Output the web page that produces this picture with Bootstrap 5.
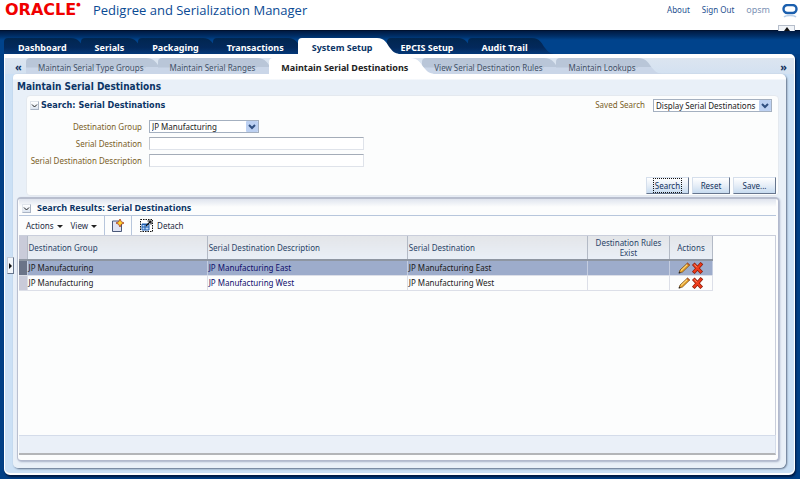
<!DOCTYPE html>
<html lang="en">
<head>
<meta charset="utf-8">
<meta name="viewport" content="width=device-width, initial-scale=1">
<title>Pedigree and Serialization Manager</title>
<link href="https://cdn.jsdelivr.net/npm/bootstrap@5.3.0/dist/css/bootstrap.min.css" rel="stylesheet">
<style>
body{font-family:"Noto Sans",sans-serif;font-size:8px;line-height:12px;color:#222;background:#003f85}
a{text-decoration:none}
.masthead{height:31px;background:#fff;border-bottom:1px solid #001230;padding:0 2px 0 5px}
.brand-mark{font:bold 16px/20px "DejaVu Sans",sans-serif;color:#f00000;width:88px}
.brand-mark sup{font-size:5px;top:-9px}
.app-name{font:13px/21px "Open Sans",sans-serif;color:#0a4a94;margin:0}
.masthead a{color:#1d4f8f}
.user-name{color:#7c92b4;font-size:9px}
.collapse-grip{width:17px;height:6px;padding:0;border:1px solid #b5bdca;border-bottom:0;background:#f1f4f8;right:5px;top:25px}
.top-nav{padding:7px 4px 0;background:linear-gradient(#001a42,#002e66 5px,#00438c 9px,#00438c)}
.main-tab,.sub-tab{height:16px;line-height:17px;position:relative}
.main-tab{color:#fff;font-size:9px;font-weight:700}
.main-tab span{background:linear-gradient(#01264f,#03295c 60%,#043878);padding:1px 4px 0 14px;border-top-left-radius:4px}
.main-tab svg{width:22px;height:16px;margin-right:-12px}
.main-tab.on{color:#0c3566;z-index:2}
.main-tab.on span{background:#fff}
.frame{margin:0 5px 4px 4px;background:#cbe0f5;border:1px solid #fff;border-top:4px solid #fff;border-radius:0 5px 6px 6px;border-bottom:2px solid #fff;padding:0 8px 5px;box-shadow:1px 2px 2px #001a42}
.sub-nav{background:linear-gradient(#dce5f0,#d3e1f1);margin:0 -8px;padding:0 7px 0 10px;height:16px}
.sub-tab{font-size:8px;line-height:19px;color:#3f5066}
.sub-tab span{background:linear-gradient(#b9c6d8 9px,#cad6e8 10px);padding:0 2px 0 12px;border-top-left-radius:4px}
.sub-tab svg{width:24px;height:16px;margin-right:-12px}
.sub-tab.on{color:#222;font-size:9px;font-weight:700;z-index:2}
.sub-tab.on span{background:#fff}
.nav-step{border:0;background:none;padding:0;width:11px;color:#12315c;font-weight:700;font-size:11px;line-height:15px;text-align:left}
.panel-page{background:linear-gradient(#fff 5px,#e9f0f8 6px);border-radius:4px 5px 6px 5px;padding:6px 7px 7px 4px;box-shadow:1px 1px 2px #5f6f87}
.page-title{font:bold 10px/14px "DejaVu Sans Condensed",sans-serif;color:#0c3566;margin:0}
.query-box{background:#fcfdfd;border:1px solid #e4e9ef;border-radius:4px;margin:1px 0 0 9px;padding:2px 2px 1px 3px;min-height:101px}
.box-title{font:bold 9px/14px "DejaVu Sans Condensed",sans-serif;color:#0c3566;margin:0}
.result-head .box-title{font-family:"Noto Sans",sans-serif}
.disclose{width:9px;height:9px;margin-right:2px;padding:0;border:1px solid #aab4c4;border-top-color:#e0e5ec;border-left-color:#e0e5ec;background:linear-gradient(#fff,#dbe4f0)}
.fld-label{color:#7b5f28;width:112px;text-align:right}
.fld{height:13px;border:1px solid #dfe3ea;border-top:1px solid #a4acb8;border-left-color:#c3c8d0;background:#fff;padding:0 2px;font-size:8px;line-height:11px;border-radius:0;width:215px;color:#222}
select.fld{appearance:none;border-color:#a4b0c0;width:110px;background:#fff url("data:image/svg+xml,%3Csvg xmlns='http://www.w3.org/2000/svg' viewBox='0 0 12 11'%3E%3Crect width='12' height='11' rx='1' fill='%23bdd1f2'/%3E%3Cpath d='M3 4l3 3 3-3' fill='none' stroke='%23304f80' stroke-width='2'/%3E%3C/svg%3E") no-repeat right 0 top 0/12px 11px}
select.saved{width:119px}
.fields{gap:4px;margin-top:8px}
.fields>div{gap:7px}
.cmd{height:17px;min-width:38px;padding:0 7px;border:1px solid #d5dfec;border-right:1px solid #66758d;border-bottom:1px solid #66758d;border-radius:0;font-size:8px;line-height:14px;color:#12315c;background:linear-gradient(#fff,#e6eef7 50%,#c7dbf0)}
.cmd.wide{min-width:43px}
.cmd.focused span{outline:1px dotted #111;outline-offset:1px}
.cmds{gap:3px}
.result-box{background:#fcfdfd;border:1px solid #b2b9cd;border-left:1px solid #b9c0d0;border-top:2px solid #b8bece;border-radius:4px;margin-top:1px;padding:0 2px 5px 1px;box-shadow:1px 1px 2px #a9b2c8}
.result-head{height:17px;padding:2px 4px 0 3px;background:linear-gradient(#dfe4ee,#fcfdfd 8px);border-bottom:1px solid #b7c6dc}
.tool-row{height:19px}
.tool{border:0;background:none;padding:0;color:#1d2c44;font-size:8px;line-height:12px}
.tool-menu::after{content:"";display:inline-block;border:3px solid transparent;border-top-color:#222;border-bottom:0;margin-left:3px;vertical-align:1px}
.tool-cell{border-right:1px solid #b7c6dc;padding:0 7px}
.grid-area{border:1px solid #c9cedb;border-left:0;border-bottom:0;background:#fcfdfd}
.results{table-layout:fixed;width:694px;border-collapse:collapse}
.results th{height:24px;font-weight:400;color:#2a4468;background:linear-gradient(#e3e5e8,#e9eff7);border-right:1px solid #b3bac6;border-bottom:2px solid #8e96a2;padding:0 1px;line-height:10px;vertical-align:middle}
.results td{height:15px;padding:0 1px;line-height:13px;border-right:1px solid #dcdfe8;border-bottom:1px solid #dcdfe8;color:#1b1b1b}
.results tr.picked td{background:#9daccb;border-right-color:#c4cde0}
.results .grip{background:#c9cbd9}
.results tr.picked td.grip{background:#6b7488}
.results td a{color:#10106c}
.results td button{border:0;background:none;padding:0;width:13px;height:12px}
.c-grip{width:8px}.c-group{width:180px}.c-desc{width:200px}.c-dest{width:180px}.c-rule{width:82px}.c-act{width:43px}
.grid-foot{height:20px;background:#eaf0f8;border:1px solid #d4dcea;border-bottom:2px solid #b3b5b8;border-left:0}
.side-grip{left:7px;top:257px;width:7px;height:17px;padding:0;border:1px solid #c0c8d4;border-right-color:#66758d;border-bottom-color:#66758d;background:#f2f6fa;z-index:3}
svg{display:block;flex:none}
</style>
<script src="https://cdn.jsdelivr.net/npm/bootstrap@5.3.0/dist/js/bootstrap.bundle.min.js"></script>
</head>
<body class="d-flex flex-column min-vh-100 position-relative">
<svg width="0" height="0" class="position-absolute" aria-hidden="true">
  <defs>
    <linearGradient id="navy" x2="0" y2="1"><stop stop-color="#01264f"/><stop offset=".6" stop-color="#03295c"/><stop offset="1" stop-color="#043878"/></linearGradient>
    <linearGradient id="steel" x2="0" y2="1"><stop offset=".54" stop-color="#b9c6d8"/><stop offset=".58" stop-color="#cad6e8"/></linearGradient>
    <symbol id="slope" viewBox="0 0 22 16" preserveAspectRatio="none"><path d="M0 0C8 0 10 6 13 10S18 15 22 16H0z"/></symbol>
    <symbol id="pencil" viewBox="0 0 13 12"><path d="M1 11L2 8 9.500 1 11.800 3 4.500 10z" fill="#e9a22a" stroke="#6b4512" stroke-width=".7"/><path d="M3 8.500L9.500 2.300" stroke="#ffe99a" stroke-width="1"/><path d="M9 1.300L11.500 3.500" stroke="#b5542a" stroke-width="1.200"/><path d="M.6 11.500l.6-2 1.500 1.400z" fill="#222"/></symbol>
    <symbol id="cross" viewBox="0 0 13 12"><path d="M3.500 3L9.500 9.500M9.700 2.500L3.500 9.500" stroke="#8d1d0b" stroke-width="3.600" stroke-linecap="square"/><path d="M3.500 3L9.500 9.500M9.700 2.500L3.500 9.500" stroke="#ee3b1b" stroke-width="2.200" stroke-linecap="square"/><path d="M3.300 2.500L6 5.300" stroke="#ff9a72" stroke-width="1"/></symbol>
  </defs>
</svg>
<header class="masthead d-flex align-items-start">
  <div class="brand-mark">ORACLE<sup>●</sup></div>
  <h1 class="app-name">Pedigree and Serialization Manager</h1>
  <div class="ms-auto d-flex align-items-start pt-1">
    <a href="#" class="me-2">About</a><a href="#" class="mx-1 pe-1">Sign Out</a><span class="user-name mx-1 pe-2">opsm</span>
    <svg width="16" height="16" viewBox="0 0 16 16" fill="none" aria-label="Status"><rect x="1.500" y="1" width="13" height="8" rx="4" stroke="#1b5fae" stroke-width="2.400"/><path d="M2 13c2-2 10-2 12 0" stroke="#b9cfe8" stroke-width="1.500"/></svg>
  </div>
  <button class="collapse-grip position-absolute d-flex justify-content-center" aria-label="Collapse header"><svg width="8" height="5" viewBox="0 0 8 5"><path d="M1 5l3-4 3 4z" fill="#111"/></svg></button>
</header>
<nav class="top-nav d-flex" aria-label="Main">
  <a href="#" class="main-tab d-flex"><span>Dashboard</span><svg fill="url(#navy)"><use href="#slope"/></svg></a>
  <a href="#" class="main-tab d-flex"><span>Serials</span><svg fill="url(#navy)"><use href="#slope"/></svg></a>
  <a href="#" class="main-tab d-flex"><span>Packaging</span><svg fill="url(#navy)"><use href="#slope"/></svg></a>
  <a href="#" class="main-tab d-flex"><span>Transactions</span><svg fill="url(#navy)"><use href="#slope"/></svg></a>
  <a href="#" class="main-tab on d-flex"><span>System Setup</span><svg fill="#fff"><use href="#slope"/></svg></a>
  <a href="#" class="main-tab d-flex"><span>EPCIS Setup</span><svg fill="url(#navy)"><use href="#slope"/></svg></a>
  <a href="#" class="main-tab d-flex"><span>Audit Trail</span><svg fill="url(#navy)"><use href="#slope"/></svg></a>
</nav>
<button class="side-grip position-absolute" aria-label="Open side panel"><svg width="5" height="9" viewBox="0 0 5 9"><path d="M1 2l3 3-3 3z" fill="#111"/></svg></button>
<div class="frame d-flex flex-column flex-grow-1">
  <nav class="sub-nav d-flex" aria-label="System setup">
    <button class="nav-step" aria-label="Previous tabs">«</button>
    <a href="#" class="sub-tab d-flex"><span>Maintain Serial Type Groups</span><svg fill="url(#steel)"><use href="#slope"/></svg></a>
    <a href="#" class="sub-tab d-flex"><span>Maintain Serial Ranges</span><svg fill="url(#steel)"><use href="#slope"/></svg></a>
    <a href="#" class="sub-tab on d-flex"><span>Maintain Serial Destinations</span><svg fill="#fff"><use href="#slope"/></svg></a>
    <a href="#" class="sub-tab d-flex"><span>View Serial Destination Rules</span><svg fill="url(#steel)"><use href="#slope"/></svg></a>
    <a href="#" class="sub-tab d-flex"><span>Maintain Lookups</span><svg fill="url(#steel)"><use href="#slope"/></svg></a>
    <button class="nav-step ms-auto text-end" aria-label="Next tabs">»</button>
  </nav>
  <main class="panel-page d-flex flex-column flex-grow-1">
    <h2 class="page-title">Maintain Serial Destinations</h2>
    <form class="query-box d-flex flex-column">
      <div class="d-flex align-items-center">
        <button type="button" class="disclose" aria-label="Collapse search"><svg width="7" height="7" viewBox="0 0 7 7"><path d="M1 2.500l2.500 2.500L6 2.500" fill="none" stroke="#222"/></svg></button>
        <h3 class="box-title">Search: Serial Destinations</h3>
        <label for="saved" class="fld-label ms-auto me-1">Saved Search</label>
        <select id="saved" class="fld saved ms-1 me-1"><option>Display Serial Destinations</option></select>
      </div>
      <div class="fields d-flex flex-column">
        <div class="d-flex align-items-center"><label class="fld-label" for="grp">Destination Group</label><select id="grp" class="fld"><option>JP Manufacturing</option></select></div>
        <div class="d-flex align-items-center"><label class="fld-label" for="dst">Serial Destination</label><input id="dst" class="fld" type="text"></div>
        <div class="d-flex align-items-center"><label class="fld-label" for="dsc">Serial Destination Description</label><input id="dsc" class="fld" type="text"></div>
      </div>
      <div class="cmds d-flex justify-content-end mt-auto">
        <button type="button" class="cmd wide focused"><span>Search</span></button><button type="button" class="cmd">Reset</button><button type="button" class="cmd wide">Save...</button>
      </div>
    </form>
    <section class="result-box d-flex flex-column flex-grow-1">
      <div class="result-head d-flex align-items-center">
        <button type="button" class="disclose" aria-label="Collapse results"><svg width="7" height="7" viewBox="0 0 7 7"><path d="M1 2.500l2.500 2.500L6 2.500" fill="none" stroke="#222"/></svg></button>
        <h3 class="box-title ps-1">Search Results: Serial Destinations</h3>
      </div>
      <div class="tool-row d-flex align-items-stretch">
        <div class="tool-cell d-flex align-items-center gap-2">
          <button class="tool tool-menu">Actions</button><button class="tool tool-menu">View</button>
        </div>
        <div class="tool-cell d-flex align-items-center">
          <button class="tool" aria-label="Create"><svg width="12" height="13" viewBox="0 0 12 13"><path d="M.5 2h7l2 2v8.500h-9z" fill="#dfe3f2" stroke="#4a5878"/><path d="M8 0l1.300 2.700L12 4 9.300 5.300 8 8 6.700 5.300 4 4l2.700-1.300z" fill="#ffd52e" stroke="#a6331b" stroke-width=".8"/></svg></button>
        </div>
        <button class="tool d-flex align-items-center ms-2"><svg width="13" height="13" viewBox="0 0 13 13" class="me-1"><path d="M.5.500h12v12H.5z" fill="#fff" stroke="#111" stroke-dasharray="1.500 1"/><path d="M2 5h7v6H2z" fill="#bcd8f8" stroke="#1c5cae"/><path d="M2 5.500h7M2 8h7M5 5v6" stroke="#1c5cae"/><path d="M6 7l5-5M7.500 2H11v3.500" stroke="#111" stroke-width="1.200" fill="none"/></svg>Detach</button>
      </div>
      <div class="grid-area flex-grow-1">
        <table class="results">
          <colgroup><col class="c-grip"><col class="c-group"><col class="c-desc"><col class="c-dest"><col class="c-rule"><col class="c-act"></colgroup>
          <thead><tr><th class="grip"></th><th>Destination Group</th><th>Serial Destination Description</th><th>Serial Destination</th><th class="text-center">Destination Rules Exist</th><th class="text-center">Actions</th></tr></thead>
          <tbody>
            <tr class="picked"><td class="grip"></td><td>JP Manufacturing</td><td><a href="#">JP Manufacturing East</a></td><td>JP Manufacturing East</td><td></td><td><div class="d-flex justify-content-center"><button aria-label="Edit"><svg width="13" height="12"><use href="#pencil"/></svg></button><button aria-label="Delete"><svg width="13" height="12"><use href="#cross"/></svg></button></div></td></tr>
            <tr><td class="grip"></td><td>JP Manufacturing</td><td><a href="#">JP Manufacturing West</a></td><td>JP Manufacturing West</td><td></td><td><div class="d-flex justify-content-center"><button aria-label="Edit"><svg width="13" height="12"><use href="#pencil"/></svg></button><button aria-label="Delete"><svg width="13" height="12"><use href="#cross"/></svg></button></div></td></tr>
          </tbody>
        </table>
      </div>
      <div class="grid-foot"></div>
    </section>
  </main>
</div>
</body>
</html>
